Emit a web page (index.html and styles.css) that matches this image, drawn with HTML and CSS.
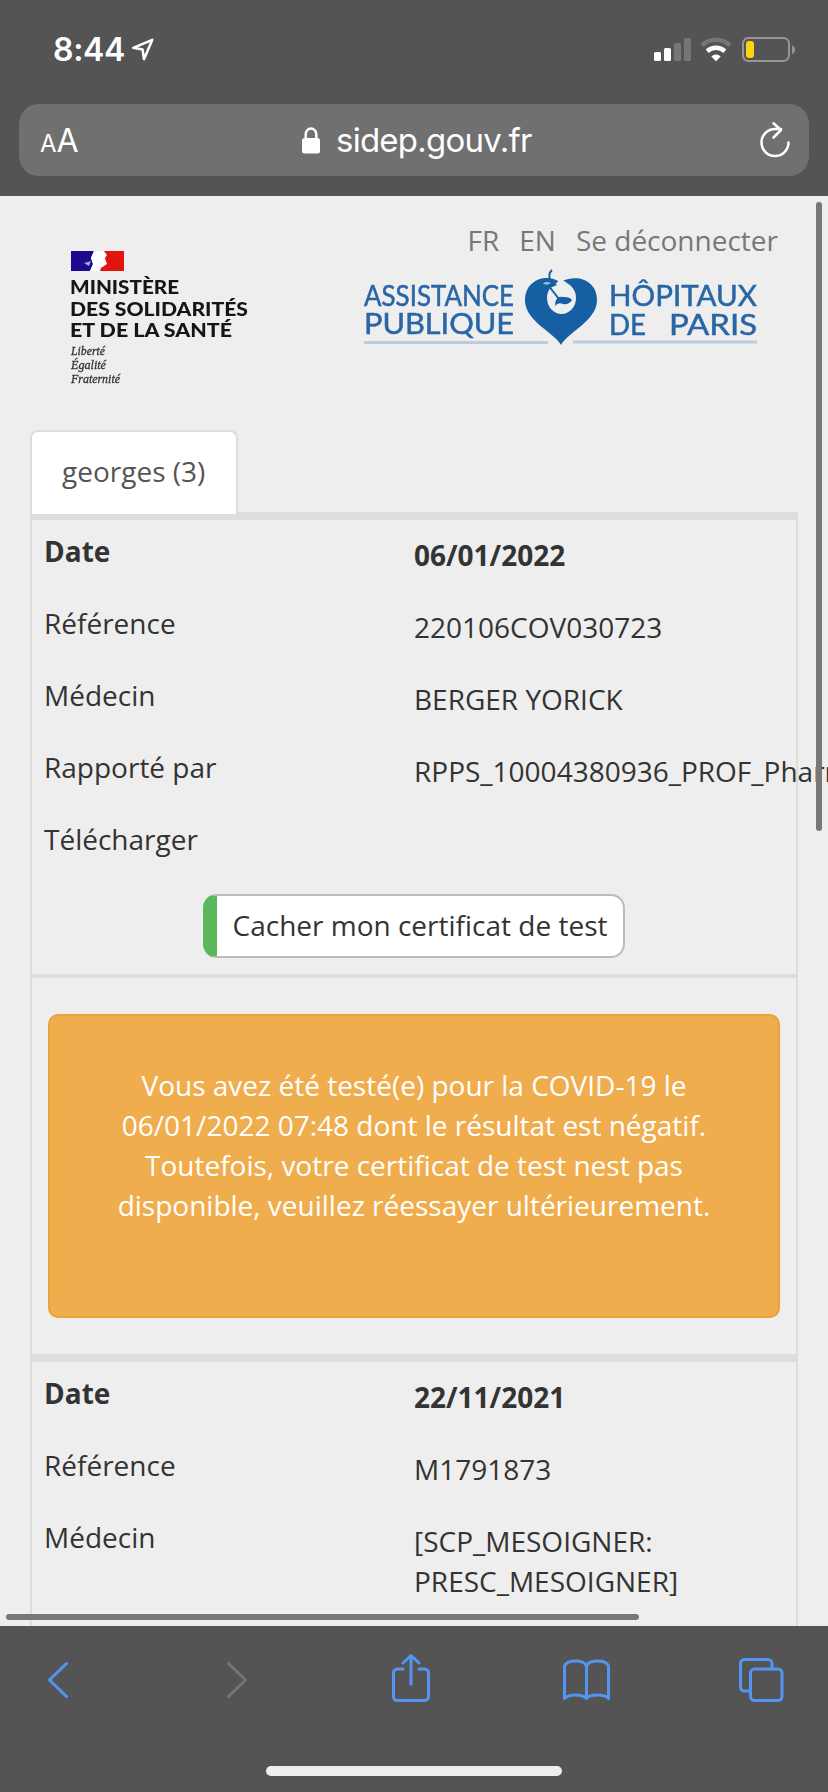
FILE: index.html
```html
<!DOCTYPE html>
<html lang="fr">
<head>
<meta charset="utf-8">
<title>sidep.gouv.fr</title>
<link rel="stylesheet" href="styles.css">
</head>
<body>
<div class="screen">
  <header class="chrome">
    <div class="status">
      <span class="clock">8:44</span>
      <svg class="location" width="24" height="24" viewBox="0 0 24 24"><path d="M2.2 9.8 21.3 1.8 13 21.2 11.6 11.6Z" fill="none" stroke="#fff" stroke-width="2.5" stroke-linejoin="round"/></svg>
      <div class="indicators">
        <svg width="37" height="24" viewBox="0 0 37 24"><g fill="#fff"><rect y="14" width="7" height="9" rx="1.6"/><rect x="10" y="10" width="7" height="13" rx="1.6"/></g><g fill="#767676"><rect x="20" y="5" width="7" height="18" rx="1.6"/><rect x="30" width="7" height="23" rx="1.6"/></g></svg>
        <svg class="wifi" width="32" height="24" viewBox="0 0 32 24"><path d="M2 7.3a20.3 20.3 0 0 1 28 0" fill="none" stroke="#767676" stroke-width="4.6"/><path d="M7.2 13.2a13 13 0 0 1 17.6 0" fill="none" stroke="#fff" stroke-width="4.6"/><path d="M11.3 18.4a7 7 0 0 1 9.4 0L16 23.2Z" fill="#fff"/></svg>
        <svg class="battery" width="54" height="26" viewBox="0 0 54 26"><rect x="1" y="1" width="46" height="23" rx="5.5" fill="none" stroke="#969696" stroke-width="2"/><rect x="4" y="4" width="8" height="17" rx="3" fill="#fdd50c"/><path d="M50 8.5c4 1 4 7.500 0 8.500Z" fill="#969696"/></svg>
      </div>
    </div>
    <div class="address">
      <span class="reader"><span class="reader-small">A</span>A</span>
      <div class="host">
        <svg width="18" height="27" viewBox="0 0 18 27"><rect y="11" width="18" height="15.500" rx="2.500" fill="#fff"/><path d="M3.700 12V7.500a5.300 6 0 0 1 10.600 0V12" fill="none" stroke="#fff" stroke-width="2.500"/></svg>
        <span>sidep.gouv.fr</span>
      </div>
      <svg class="reload" width="32" height="38" viewBox="0 0 32 38"><path d="M29.500 21.500A13.500 13.500 0 1 1 16 8H22M14.500 2.300 22 9 14.500 16.500" fill="none" stroke="#fff" stroke-width="2.500" stroke-linecap="round" stroke-linejoin="round"/></svg>
    </div>
  </header>

  <main class="page">
    <div class="masthead">
      <svg class="ministry" width="190" height="144" viewBox="0 0 190 144">
        <path d="M1 1H24L21 8 23 14 20 21H1Z" fill="#1b0a8c"/>
        <path d="M24 1H34L36 6 33 9 37 14 31 18 30 21H20L23 14 21 8Z" fill="#fff"/>
        <path d="M34 1H54V21H30L31 18 37 14 35 8 37 5Z" fill="#e1140f"/>
        <path d="m14 13 7-2-2 5Z" fill="#aaa7d4"/>
        <g class="ministry-name"><text x="0" y="44" textLength="109" lengthAdjust="spacingAndGlyphs">MINISTÈRE</text><text x="0" y="65.500" textLength="178" lengthAdjust="spacingAndGlyphs">DES SOLIDARITÉS</text><text x="0" y="86.500" textLength="162" lengthAdjust="spacingAndGlyphs">ET DE LA SANTÉ</text></g>
        <g class="motto"><text x="1" y="105" textLength="34" lengthAdjust="spacingAndGlyphs">Liberté</text><text x="1" y="119" textLength="35" lengthAdjust="spacingAndGlyphs">Égalité</text><text x="1" y="132.500" textLength="49" lengthAdjust="spacingAndGlyphs">Fraternité</text></g>
      </svg>
      <div class="masthead-right">
        <nav class="links"><a>FR</a><a>EN</a><a>Se déconnecter</a></nav>
        <svg class="aphp" width="396" height="80" viewBox="0 0 396 80">
          <g class="aphp-name"><text x="0" y="37.500" textLength="150" lengthAdjust="spacingAndGlyphs">ASSISTANCE</text><text x="0" y="66" textLength="150" lengthAdjust="spacingAndGlyphs">PUBLIQUE</text><text x="245" y="38" textLength="148" lengthAdjust="spacingAndGlyphs">HÔPITAUX</text><text x="245" y="67" textLength="37" lengthAdjust="spacingAndGlyphs">DE</text><text x="305" y="67" textLength="88" lengthAdjust="spacingAndGlyphs">PARIS</text></g>
          <path d="M0 74.500H184M209 74H393" stroke="#bccbe1" stroke-width="3"/>
          <path d="M197 77C190 64 160 53 161 31 162 12 182 5 196 14 214 5 233 13 233 32 233 53 204 64 197 77Z" fill="#165fa3"/>
          <ellipse cx="197.500" cy="30" rx="14.500" ry="16" fill="#eee"/>
          <path d="M193 15 195 10 199 12 204 16Z" fill="#eee"/>
          <path d="M186 11Q184 6 188 2M184 17 195 31" fill="none" stroke="#165fa3" stroke-width="2"/>
          <path d="M179 15.500Q182 13 187 15 183 18 179 15.500Z" fill="#9dbddd"/>
          <path d="M189 13 193 17 186 20Z" fill="#165fa3"/>
          <path d="M191 38Q191 27 200 29 206 29 208 32 205 37 199 36 194 34 191 38Z" fill="#165fa3"/>
        </svg>
      </div>
    </div>

    <div class="tabs"><a class="tab">georges (3)</a></div>
    <section class="results">
      <article class="record">
        <dl class="fields">
          <dt class="strong">Date</dt><dd class="strong">06/01/2022</dd>
          <dt>Référence</dt><dd>220106COV030723</dd>
          <dt>Médecin</dt><dd>BERGER YORICK</dd>
          <dt>Rapporté par</dt><dd class="nowrap">RPPS_10004380936_PROF_Pharmacien</dd>
          <dt>Télécharger</dt><dd></dd>
        </dl>
        <div class="actions"><button class="toggle" type="button">Cacher mon certificat de test</button></div>
      </article>
      <div class="notice-row">
        <p class="notice">Vous avez été testé(e) pour la COVID-19 le<br>06/01/2022 07:48 dont le résultat est négatif.<br>Toutefois, votre certificat de test nest pas<br>disponible, veuillez réessayer ultérieurement.</p>
      </div>
      <article class="record">
        <dl class="fields">
          <dt class="strong">Date</dt><dd class="strong">22/11/2021</dd>
          <dt>Référence</dt><dd>M1791873</dd>
          <dt>Médecin</dt><dd>[SCP_MESOIGNER:<br>PRESC_MESOIGNER]</dd>
        </dl>
      </article>
    </section>
    <div class="scroll-y"></div>
    <div class="scroll-x"></div>
  </main>

  <footer class="toolbar">
    <div class="tools">
      <svg width="48" height="56" viewBox="-1 0 48 56"><path d="M23.500 11.500 6.500 28 23.500 44.500"/></svg>
      <svg class="disabled" width="48" height="56" viewBox="0 0 48 56"><path d="M12.500 11.500 29.500 28 12.500 44.500"/></svg>
      <svg width="48" height="56" viewBox="4 0 48 56"><path d="M17 17H11.500A4 4 0 0 0 7.500 21V44.500A4 4 0 0 0 11.500 48.500H38.500A4 4 0 0 0 42.500 44.500V21A4 4 0 0 0 38.500 17H33M25 32V4M17 11 25 3.500 33 11"/></svg>
      <svg width="48" height="56" viewBox="2 0 48 56"><path d="M24.500 14Q22.500 9 13.500 9T2.500 14V46.500Q6 43 13.500 43T24.500 46.500Q27 43 35.500 43T46.500 46.500V14Q44.500 9 35.500 9T24.500 14V46"/></svg>
      <svg width="48" height="56" viewBox="0 0 48 56"><rect x="12.500" y="17" width="31.500" height="31.500" rx="4"/><path d="M12.500 39H6.500A4 4 0 0 1 2.500 35V11.500A4 4 0 0 1 6.500 7.500H30A4 4 0 0 1 34 11.500V17"/></svg>
    </div>
    <div class="home"></div>
  </footer>
</div>
</body>
</html>
```
FILE: styles.css
```css
* { box-sizing: border-box; }
body { margin: 0; font-family: "Open Sans", sans-serif; font-size: 28px; line-height: 40px; color: #333; }
svg { display: block; flex: none; overflow: visible; }
.screen { width: 828px; height: 1792px; display: flex; flex-direction: column; overflow: hidden; background: #eee; }

.chrome { flex: none; height: 196px; background: #545454; color: #fff; font-family: Inter, sans-serif; }
.status { height: 104px; padding: 37px 32px 0 53px; display: flex; align-items: flex-start; }
.clock { width: 78px; font-size: 32px; line-height: 25px; font-weight: 600; letter-spacing: -.3px; white-space: nowrap; }
.location { margin-top: 1px; }
.indicators { margin-left: auto; padding-top: 1px; display: flex; align-items: flex-start; }
.wifi { margin-left: 9px; }
.battery { margin: -1px 0 0 10px; }
.address { height: 72px; margin: 0 19px; padding: 0 18px 0 21px; border-radius: 20px; background: #707070; display: flex; align-items: center; }
.reader { width: 60px; padding-top: 4px; font-size: 32px; line-height: 40px; white-space: nowrap; }
.reader-small { font-size: 24px; }
.host { flex: 1; padding-left: 202px; display: flex; align-items: center; gap: 16px; font-size: 33px; letter-spacing: -.75px; }

.page { position: relative; flex: none; height: 1430px; padding: 24px 30px 0; overflow: hidden; background: #eee; }
.masthead { height: 210px; display: flex; justify-content: space-between; align-items: flex-start; }
.ministry { margin: 30px 0 0 40px; filter: blur(.5px); }
.ministry-name { font: 900 19.500px Lato, sans-serif; fill: #151515; }
.motto { font: italic 400 12.500px "Liberation Serif", serif; fill: #333; stroke: #333; stroke-width: .3px; }
.masthead-right { width: 437px; }
.links { display: flex; justify-content: flex-end; gap: 20px; padding-right: 20px; color: #777; }
.aphp { margin: 8px 0 0 3px; filter: blur(.5px); }
.aphp-name { font: 400 28px Lato, sans-serif; fill: #2866a5; stroke: #2866a5; stroke-width: .5px; }

.tabs { position: relative; z-index: 1; height: 84px; display: flex; }
.tab { width: 208px; height: 84px; padding: 19px 0 0 30px; border: 2px solid #ddd; border-bottom: 0; border-radius: 8px 8px 0 0; background: #fff; color: #555; }
.results { margin-top: -2px; height: 1200px; border: 2px solid #ddd; border-top-width: 8px; }
.fields { margin: 0; display: grid; grid-template-columns: 372px 1fr; grid-auto-rows: minmax(72px, auto); }
.fields dt { padding: 11px 0 0 12px; }
.fields dd { margin: 0; padding: 15px 0 17px 10px; min-width: 0; }
.fields .strong { font-weight: 700; }
.fields .nowrap { white-space: nowrap; }
.actions { height: 94px; padding-top: 14px; display: flex; justify-content: center; }
.toggle { width: 422px; height: 64px; padding: 0 0 2px; border: 2px solid #bbb; border-left: 14px solid #5cb85c; border-radius: 14px; background: #fff; color: #333; font: 28px/40px "Open Sans", sans-serif; white-space: nowrap; }
.notice-row { height: 388px; padding: 36px 16px; border-top: 4px solid #ddd; border-bottom: 8px solid #ddd; }
.notice { margin: 0; height: 304px; padding-top: 49px; border: 2px solid #eca23a; border-radius: 10px; background: #f0ad4e; color: #fff; text-align: center; white-space: nowrap; }

.scroll-y, .scroll-x { position: absolute; z-index: 2; border-radius: 3px; background: #777; }
.scroll-y { right: 6px; top: 6px; width: 6px; height: 629px; }
.scroll-x { left: 6px; bottom: 6px; width: 633px; height: 6px; }

.toolbar { flex: none; height: 166px; background: #545454; display: flex; flex-direction: column; align-items: center; }
.tools { width: 100%; height: 140px; padding: 26px 42px 0; display: flex; justify-content: space-between; align-items: flex-start; }
.tools svg { fill: none; stroke: #5396f0; stroke-width: 3; stroke-linecap: round; stroke-linejoin: round; }
.tools .disabled { stroke: #747474; }
.home { width: 296px; height: 10px; border-radius: 5px; background: #eee; }
```
